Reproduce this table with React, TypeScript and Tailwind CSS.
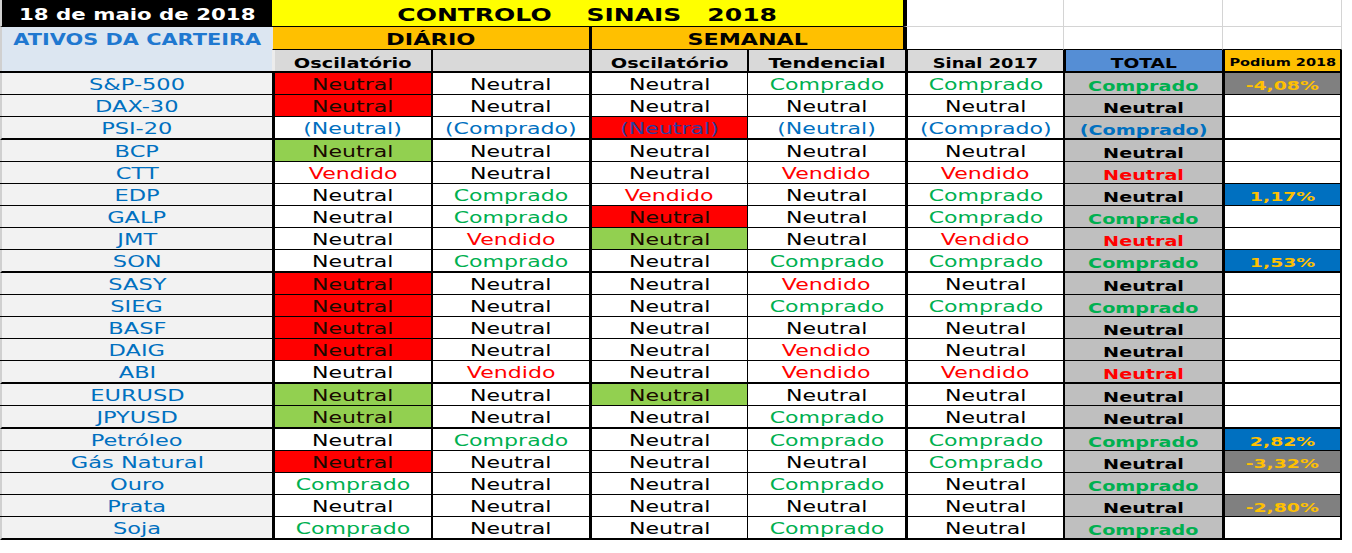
import React from "react";

type Sig = "N" | "C" | "V" | "pN" | "pC";
type Tot = "N" | "C" | "R" | "pC";
type Pod = { value: string; tone: "blue" | "gray" } | null;

type Row = {
  name: string;
  cells: string[]; // suffix "!" = red cell, "+" = green cell
  total: Tot;
  podium: Pod;
  last?: boolean;
};

const rows: Row[] = [
  { name: "S&P-500", cells: ["N!", "N", "N", "C", "C"], total: "C", podium: { value: "-4,08%", tone: "gray" } },
  { name: "DAX-30", cells: ["N!", "N", "N", "N", "N"], total: "N", podium: null },
  { name: "PSI-20", cells: ["pN", "pC", "pN!", "pN", "pC"], total: "pC", podium: null, last: true },
  { name: "BCP", cells: ["N+", "N", "N", "N", "N"], total: "N", podium: null },
  { name: "CTT", cells: ["V", "N", "N", "V", "V"], total: "R", podium: null },
  { name: "EDP", cells: ["N", "C", "V", "N", "C"], total: "N", podium: { value: "1,17%", tone: "blue" } },
  { name: "GALP", cells: ["N", "C", "N!", "N", "C"], total: "C", podium: null },
  { name: "JMT", cells: ["N", "V", "N+", "N", "V"], total: "R", podium: null },
  { name: "SON", cells: ["N", "C", "N", "C", "C"], total: "C", podium: { value: "1,53%", tone: "blue" }, last: true },
  { name: "SASY", cells: ["N!", "N", "N", "V", "N"], total: "N", podium: null },
  { name: "SIEG", cells: ["N!", "N", "N", "C", "C"], total: "C", podium: null },
  { name: "BASF", cells: ["N!", "N", "N", "N", "N"], total: "N", podium: null },
  { name: "DAIG", cells: ["N!", "N", "N", "V", "N"], total: "N", podium: null },
  { name: "ABI", cells: ["N", "V", "N", "V", "V"], total: "R", podium: null, last: true },
  { name: "EURUSD", cells: ["N+", "N", "N+", "N", "N"], total: "N", podium: null },
  { name: "JPYUSD", cells: ["N+", "N", "N", "C", "N"], total: "N", podium: null, last: true },
  { name: "Petróleo", cells: ["N", "C", "N", "C", "C"], total: "C", podium: { value: "2,82%", tone: "blue" } },
  { name: "Gás Natural", cells: ["N!", "N", "N", "N", "C"], total: "N", podium: { value: "-3,32%", tone: "gray" } },
  { name: "Ouro", cells: ["C", "N", "N", "C", "N"], total: "C", podium: null },
  { name: "Prata", cells: ["N", "N", "N", "N", "N"], total: "N", podium: { value: "-2,80%", tone: "gray" } },
  { name: "Soja", cells: ["C", "N", "N", "C", "N"], total: "C", podium: null, last: true },
];

const label: Record<Sig, string> = {
  N: "Neutral",
  C: "Comprado",
  V: "Vendido",
  pN: "(Neutral)",
  pC: "(Comprado)",
};

const sigColor: Record<Sig, string> = {
  N: "text-black",
  C: "text-[#00b050]",
  V: "text-[#ff0000]",
  pN: "text-[#0070c0]",
  pC: "text-[#0070c0]",
};

const totLabel: Record<Tot, string> = { N: "Neutral", C: "Comprado", R: "Neutral", pC: "(Comprado)" };
const totColor: Record<Tot, string> = {
  N: "text-black",
  C: "text-[#00b050]",
  R: "text-[#ff0000]",
  pC: "text-[#0070c0]",
};

// left borders of the five signal columns B..F
const sigCols = [
  "w-[159px] border-l-[3px]",
  "w-[158px] border-l-2",
  "w-[158px] border-l-[3px]",
  "w-[158px] border-l",
  "w-[158px] border-l-[3px]",
];

// text is drawn stretched sideways, as in the sheet
const Wide = ({ children, className = "" }: { children: React.ReactNode; className?: string }) => (
  <span className={`inline-block whitespace-pre leading-none translate-y-[2px] ${className}`}>{children}</span>
);

function DataRow({ row }: { row: Row }) {
  const h = row.last ? "h-[23px] border-b-2" : "h-[22px] border-b";
  return (
    <div className={`flex ${h} border-black`}>
      <div
        className={`w-[272px] flex items-center justify-center bg-[#f2f2f2] border-l-2 border-l-[#d0d0d0] ${
          row.last ? "border-b-2 border-b-black -mb-[2px]" : ""
        }`}
      >
        <Wide className="text-[15px] scale-x-[1.5] text-[#0070c0]">{row.name}</Wide>
      </div>
      {row.cells.map((c, i) => {
        const red = c.endsWith("!");
        const green = c.endsWith("+");
        const key = c.replace(/[!+]$/, "") as Sig;
        const bg = red ? "bg-[#ff0000]" : green ? "bg-[#92d050]" : "bg-white";
        const color = red || green ? (key.startsWith("p") ? "text-[#2a3fa0]" : "text-[#1a0a00]") : sigColor[key];
        return (
          <div key={i} className={`${sigCols[i]} border-black ${bg} flex items-center justify-center`}>
            <Wide className={`text-[15px] scale-x-[1.47] ${color}`}>{label[key]}</Wide>
          </div>
        );
      })}
      <div className="w-[159px] border-l-2 border-black bg-[#bfbfbf] flex items-center justify-center">
        <Wide className={`text-[14px] font-bold scale-x-[1.37] ${totColor[row.total]}`}>{totLabel[row.total]}</Wide>
      </div>
      <div
        className={`w-[120px] border-l-[3px] border-r-2 border-black flex items-center justify-center ${
          row.podium ? (row.podium.tone === "blue" ? "bg-[#0070c0]" : "bg-[#808080]") : "bg-white"
        }`}
      >
        {row.podium && (
          <Wide className="text-[13px] font-bold scale-x-[1.45] text-[#ffc000]">{row.podium.value}</Wide>
        )}
      </div>
    </div>
  );
}

export default function App() {
  return (
    <div className="w-[1352px] h-[553px] bg-white font-['DejaVu_Sans',Verdana,sans-serif] overflow-hidden">
      <div className="w-[1342px]">
        {/* title row */}
        <div className="flex h-[27px]">
          <div className="w-[272px] bg-black border-l-2 border-l-[#d0d0d0] border-b border-b-black flex items-center justify-center">
            <Wide className="text-[15px] font-bold scale-x-[1.42] text-white">18 de maio de 2018</Wide>
          </div>
          <div className="w-[631px] bg-[#ffff00] border-b border-black flex items-center justify-center">
            <Wide className="text-[17px] font-bold scale-x-[1.47] text-black">{"CONTROLO    SINAIS   2018"}</Wide>
          </div>
          <div className="w-[160px] border-l-[4px] border-l-black border-b border-b-[#d4d4d4]" />
          <div className="w-[159px] border-l border-[#d4d4d4] border-b" />
          <div className="w-[120px] border-l border-r border-[#d4d4d4] border-b" />
        </div>

        {/* group row */}
        <div className="flex h-[23px]">
          <div className="w-[272px] bg-[#dce6f1] border-l-2 border-l-[#d0d0d0] flex items-center justify-center">
            <Wide className="text-[15px] font-bold scale-x-[1.39] text-[#1f78d0]">ATIVOS DA CARTEIRA</Wide>
          </div>
          <div className="w-[317px] bg-[#ffc000] border-l border-l-[#e6e6e6] border-b border-b-black flex items-center justify-center">
            <Wide className="text-[15px] font-bold scale-x-[1.5] text-black">DIÁRIO</Wide>
          </div>
          <div className="w-[314px] bg-[#ffc000] border-l-[3px] border-black border-b flex items-center justify-center">
            <Wide className="text-[15px] font-bold scale-x-[1.48] text-black">SEMANAL</Wide>
          </div>
          <div className="w-[160px] border-l-[4px] border-l-black border-b border-b-black" />
          <div className="w-[159px] border-l border-l-[#d4d4d4] border-b border-b-black" />
          <div className="w-[120px] border-l border-r border-l-[#d4d4d4] border-r-[#d4d4d4] border-b border-b-black" />
        </div>

        {/* column headers */}
        <div className="flex h-[23px] border-b-2 border-black">
          <div className="w-[272px] bg-[#dce6f1] border-l-2 border-l-[#d0d0d0]" />
          <div className="w-[159px] bg-[#d9d9d9] border-l-[3px] border-l-[#ececec] flex items-center justify-center">
            <Wide className="text-[14px] font-bold scale-x-[1.38] text-black">Oscilatório</Wide>
          </div>
          <div className="w-[158px] bg-[#d9d9d9] border-l-2 border-black" />
          <div className="w-[158px] bg-[#d9d9d9] border-l-[3px] border-black flex items-center justify-center">
            <Wide className="text-[14px] font-bold scale-x-[1.38] text-black">Oscilatório</Wide>
          </div>
          <div className="w-[158px] bg-[#d9d9d9] border-l-2 border-black flex items-center justify-center">
            <Wide className="text-[14px] font-bold scale-x-[1.39] text-black">Tendencial</Wide>
          </div>
          <div className="w-[158px] bg-[#d9d9d9] border-l-[3px] border-black flex items-center justify-center">
            <Wide className="text-[14px] font-bold scale-x-[1.27] text-black">Sinal 2017</Wide>
          </div>
          <div className="w-[159px] bg-[#558ed5] border-l-[3px] border-black flex items-center justify-center">
            <Wide className="text-[14px] font-bold scale-x-[1.33] text-black">TOTAL</Wide>
          </div>
          <div className="w-[120px] bg-[#ffc000] border-l-[3px] border-r-2 border-black flex items-center justify-center">
            <Wide className="text-[10px] font-bold scale-x-[1.45] text-black">Podium 2018</Wide>
          </div>
        </div>

        {rows.map((r) => (
          <DataRow key={r.name} row={r} />
        ))}
      </div>
    </div>
  );
}
